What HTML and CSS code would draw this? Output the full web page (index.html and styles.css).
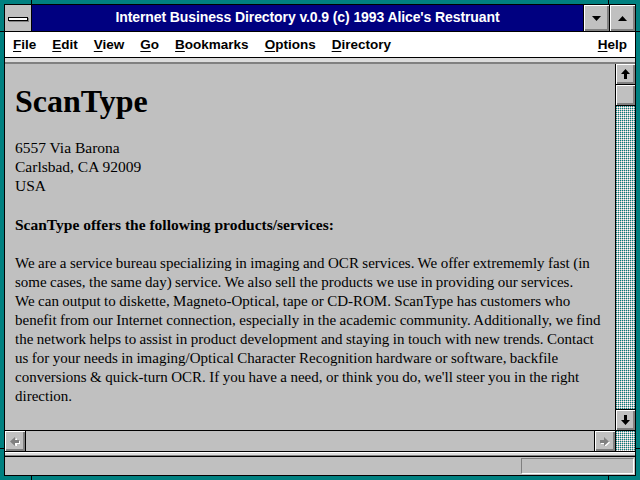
FILE: index.html
```
<!DOCTYPE html>
<html>
<head>
<meta charset="utf-8">
<link rel="stylesheet" href="styles.css">
</head>
<body>
<div class="screen">
  <div class="notch nv" style="left:31px;top:0"></div>
  <div class="notch nv" style="left:608px;top:0"></div>
  <div class="notch nv" style="left:31px;bottom:0"></div>
  <div class="notch nv" style="left:608px;bottom:0"></div>
  <div class="notch nh" style="top:31px;left:0"></div>
  <div class="notch nh" style="top:448px;left:0"></div>
  <div class="notch nh" style="top:31px;right:0"></div>
  <div class="notch nh" style="top:448px;right:0"></div>
  <div class="win">
    <div class="titlebar">
      <div class="sysbox"><div class="sysbar"></div></div>
      <div class="title">Internet Business Directory v.0.9 (c) 1993 Alice's Restruant</div>
      <div class="tbtn">
        <svg width="9" height="5" viewBox="0 0 9 5"><polygon points="0,0 9,0 4.5,5" fill="#000"/></svg>
      </div>
      <div class="tbtn">
        <svg width="9" height="5" viewBox="0 0 9 5"><polygon points="0,5 9,5 4.5,0" fill="#000"/></svg>
      </div>
    </div>
    <div class="menubar">
      <span class="mi"><u>F</u>ile</span>
      <span class="mi"><u>E</u>dit</span>
      <span class="mi"><u>V</u>iew</span>
      <span class="mi"><u>G</u>o</span>
      <span class="mi"><u>B</u>ookmarks</span>
      <span class="mi"><u>O</u>ptions</span>
      <span class="mi"><u>D</u>irectory</span>
      <span class="mi help"><u>H</u>elp</span>
    </div>
    <div class="band"></div>
    <div class="docarea">
      <div class="doc">
        <h1 class="heading">ScanType</h1>
        <p class="para">6557 Via Barona<br>Carlsbad, CA 92009<br>USA</p>
        <p class="para bold">ScanType offers the following products/services:</p>
        <p class="para body">We are a service bureau specializing in imaging and OCR services. We offer extrememly fast (in<br>some cases, the same day) service. We also sell the products we use in providing our services.<br>We can output to diskette, Magneto-Optical, tape or CD-ROM. ScanType has customers who<br>benefit from our Internet connection, especially in the academic community. Additionally, we find<br>the network helps to assist in product development and staying in touch with new trends. Contact<br>us for your needs in imaging/Optical Character Recognition hardware or software, backfile<br>conversions &amp; quick-turn OCR. If you have a need, or think you do, we'll steer you in the right<br>direction.</p>
      </div>
      <div class="vscroll">
        <div class="sbtn up">
          <svg width="9" height="10" viewBox="0 0 9 10"><polygon points="4.5,0 9,5 6,5 6,10 3,10 3,5 0,5" fill="#000"/></svg>
        </div>
        <div class="thumb"></div>
        <div class="track"></div>
        <div class="sbtn down">
          <svg width="9" height="10" viewBox="0 0 9 10"><polygon points="4.5,10 9,5 6,5 6,0 3,0 3,5 0,5" fill="#000"/></svg>
        </div>
      </div>
    </div>
    <div class="hscroll">
      <div class="hbtn left">
        <svg width="10" height="9" viewBox="0 0 10 9"><polygon points="1,4.5 6,0 6,3 10,3 10,6 6,6 6,9" fill="#fff" transform="translate(1,1)"/><polygon points="0,4.5 5,0 5,3 9,3 9,6 5,6 5,9" fill="#808080"/></svg>
      </div>
      <div class="htrack"></div>
      <div class="hbtn right">
        <svg width="10" height="9" viewBox="0 0 10 9"><polygon points="9,4.5 4,0 4,3 0,3 0,6 4,6 4,9" fill="#fff" transform="translate(1,1)"/><polygon points="9,4.5 4,0 4,3 0,3 0,6 4,6 4,9" fill="#808080"/></svg>
      </div>
      <div class="corner"></div>
    </div>
    <div class="band2"></div>
    <div class="status"><div class="statbox"></div></div>
  </div>
</div>
</body>
</html>
```
FILE: styles.css
```
html, body {
  margin: 0;
  padding: 0;
}
.screen {
  position: relative;
  width: 640px;
  height: 480px;
  box-sizing: border-box;
  background: #008080;
  padding: 4px;
  overflow: hidden;
}
.notch {
  position: absolute;
  background: #000;
}
.nv { width: 1px; height: 5px; }
.nh { width: 5px; height: 1px; }
.win {
  border: 1px solid #000;
  height: 470px;
  display: flex;
  flex-direction: column;
  background: #c0c0c0;
}
.titlebar {
  display: flex;
  height: 26px;
  border-bottom: 1px solid #000;
  flex: none;
}
.sysbox {
  width: 26px;
  background: #c0c0c0;
  border-right: 1px solid #000;
  display: flex;
  align-items: center;
  justify-content: center;
}
.sysbar {
  width: 18px;
  height: 2px;
  background: #fff;
  border: 1px solid #000;
  box-shadow: 1px 1px 0 #808080;
  margin-top: 1px;
}
.title {
  flex: 1;
  background: #000080;
  color: #fff;
  font-family: "Liberation Sans", Arial, sans-serif;
  font-weight: bold;
  font-size: 14px;
  letter-spacing: -0.1px;
  line-height: 24px;
  text-align: center;
  white-space: nowrap;
}
.tbtn {
  width: 25px;
  border-left: 1px solid #000;
  background: #c0c0c0;
  box-shadow: inset 1px 1px #fff, inset -1px -1px #808080, inset -2px -2px #808080;
  display: flex;
  align-items: center;
  justify-content: center;
}
.menubar {
  display: flex;
  height: 25px;
  background: #fff;
  border-bottom: 1px solid #000;
  padding: 0 8px;
  gap: 16px;
  font-family: "Liberation Sans", Arial, sans-serif;
  font-weight: bold;
  font-size: 13.5px;
  line-height: 25px;
  flex: none;
}
.mi u {
  text-decoration-thickness: 1px;
  text-underline-offset: 2px;
}
.help {
  margin-left: auto;
}
.band {
  height: 4px;
  background: #dcdcdc;
  border-bottom: 2px solid #808080;
  flex: none;
}
.docarea {
  display: flex;
  height: 366px;
  flex: none;
}
.doc {
  flex: 1;
  padding: 19px 10px 0 10px;
  overflow: hidden;
  font-family: "Liberation Serif", "Times New Roman", serif;
  font-size: 15.5px;
  line-height: 19px;
  color: #000;
}
.heading {
  margin: 0 0 19px 0;
  font-size: 32px;
  line-height: 36px;
  font-weight: bold;
}
.para {
  margin: 0 0 20px 0;
  white-space: nowrap;
}
.body {
  font-size: 15px;
  word-spacing: -0.3px;
}
.bold {
  font-weight: bold;
}
.vscroll {
  width: 19px;
  border-left: 1px solid #000;
  display: flex;
  flex-direction: column;
}
.sbtn, .thumb, .hbtn {
  background: #c0c0c0;
  box-shadow: inset 1px 1px #fff, inset -1px -1px #808080, inset -2px -2px #808080;
  display: flex;
  align-items: center;
  justify-content: center;
}
.sbtn {
  height: 20px;
}
.up {
  border-bottom: 1px solid #000;
}
.down {
  border-top: 1px solid #000;
}
.thumb {
  height: 20px;
  border-bottom: 1px solid #000;
}
.track, .corner {
  flex: 1;
  background-image: conic-gradient(#c0c0c0 25%, #ffffff 0 50%, #c0c0c0 0 75%, #008080 0);
  background-size: 2px 2px;
}
.hscroll {
  display: flex;
  height: 20px;
  border-top: 1px solid #000;
  border-bottom: 1px solid #000;
  flex: none;
}
.hbtn {
  width: 20px;
}
.left {
  border-right: 1px solid #000;
}
.right {
  border-left: 1px solid #000;
}
.htrack {
  flex: 1;
  background: #c0c0c0;
}
.corner {
  flex: none;
  width: 19px;
  border-left: 1px solid #000;
}
.band2 {
  height: 2px;
  border-top: 1px solid #fff;
  background: #dcdcdc;
  border-bottom: 1px solid #808080;
  box-shadow: 0 1px 0 #000;
  margin-bottom: 1px;
  flex: none;
}
.status {
  flex: 1;
  display: flex;
  justify-content: flex-end;
  padding: 1px 1px 1px 0;
}
.statbox {
  width: 111px;
  border-top: 1px solid #808080;
  border-left: 1px solid #808080;
  border-right: 1px solid #fff;
  border-bottom: 1px solid #fff;
}
```
